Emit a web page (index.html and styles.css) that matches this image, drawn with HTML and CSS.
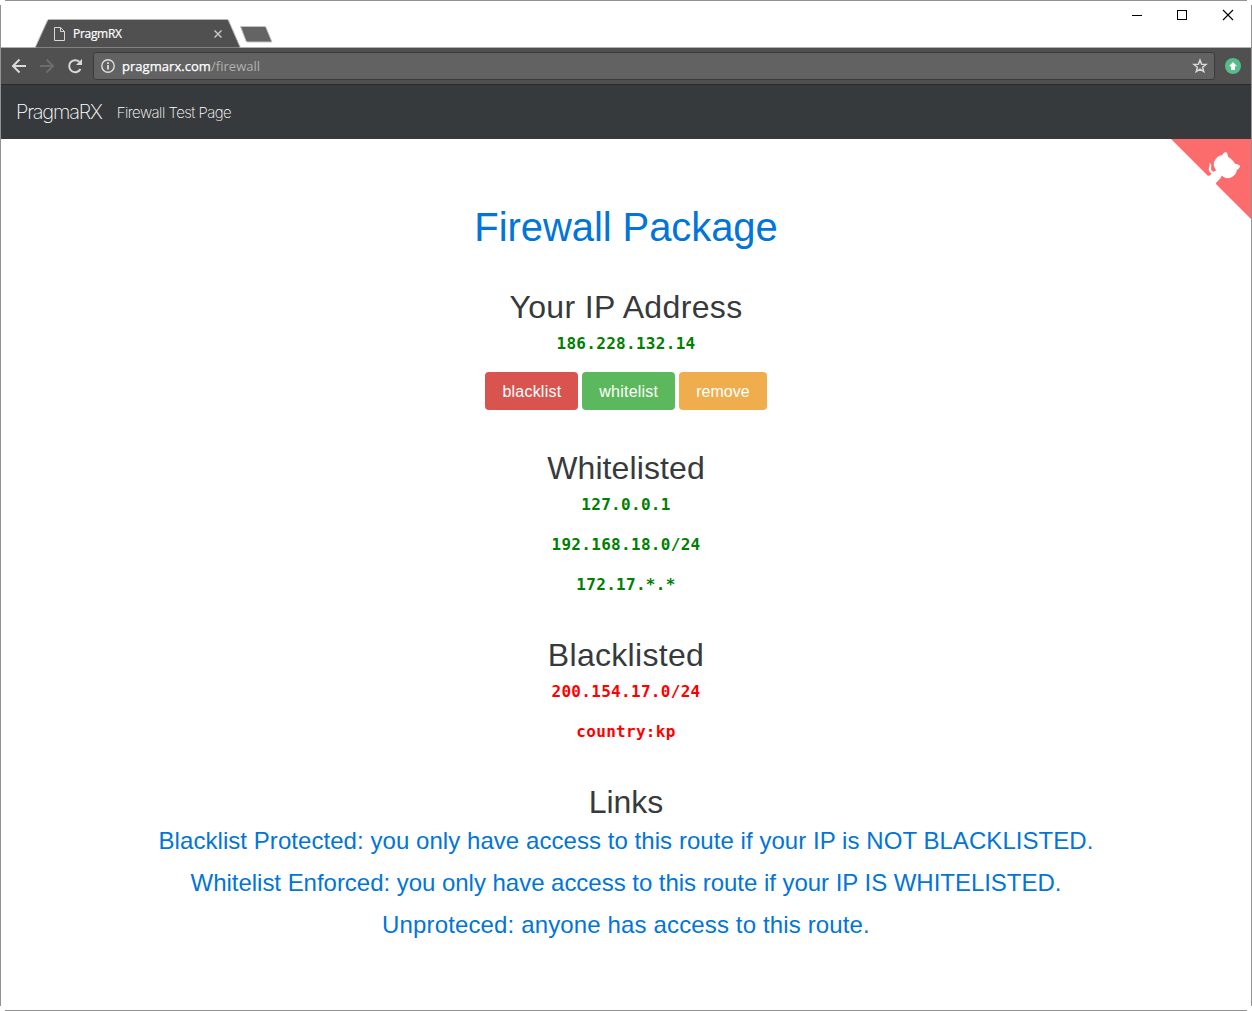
FILE: index.html
```html
<!DOCTYPE html>
<html lang="en">
<head>
<meta charset="utf-8">
<title>PragmRX</title>
<link rel="stylesheet" href="styles.css">
</head>
<body>
<div class="window">
  <i class="edge edge-top"></i><i class="edge edge-bottom"></i><i class="edge edge-left"></i><i class="edge edge-right"></i>
  <header class="titlebar">
    <div class="tab">
      <svg class="tab-shape" width="206" height="29" viewBox="0 0 206 29"><path d="M0 29 L12.5 1.5 Q13 .5 14 .5 H192 Q193 .5 193.5 1.5 L205.500 29Z" fill="#505050" stroke="#b5b5b5"/></svg>
      <svg class="tab-file" width="11" height="14" viewBox="0 0 11 14" fill="none" stroke="#d8d8d8"><path d="M.5.5H6.500L10.500 4.500V13.500H.5ZM6.500.5V4.500H10.500"/></svg>
      <span class="tab-title">PragmRX</span>
      <svg class="tab-close" width="8" height="8" viewBox="0 0 8 8" stroke="#c4c4c4" stroke-width="1.500"><path d="M.5.5 7.500 7.500M7.500.5.5 7.500"/></svg>
    </div>
    <svg class="new-tab" width="34" height="17" viewBox="0 0 34 17"><path d="M1.500 .5H25.500Q26.500 .5 27 1.500L33 16H9Q7.500 16 7 15Z" fill="#646464" stroke="#c2c2c2"/></svg>
    <svg class="controls" width="102" height="12" viewBox="0 0 102 12" fill="none" stroke="#000"><path d="M0 6.500H10M45.500 1.500H54.500V10.500H45.500Z" shape-rendering="crispEdges"/><path d="M91 1 101 11M101 1 91 11" stroke-width="1.100"/></svg>
  </header>
  <div class="toolbar">
    <svg class="nav-icons" width="74" height="16" viewBox="0 0 74 16" fill="none" stroke-width="2"><path d="M15 8H2M8.500 1.500 2 8 8.500 14.500" stroke="#dadada"/><path d="M29 8H42M35.500 1.500 42 8 35.500 14.500" stroke="#6c6c6c"/><path d="M69.500 11A6 6 0 1 1 68.300 3.800" stroke="#dadada"/><path d="M71 1V7H65Z" fill="#dadada"/></svg>
    <div class="address">
      <svg class="info" width="14" height="14" viewBox="0 0 14 14" fill="none" stroke="#dedede"><circle cx="7" cy="7" r="6.200" stroke-width="1.400"/><path d="M7 6V10.500M7 3.300V5" stroke-width="1.800"/></svg>
      <span class="url"><b>pragmarx.com</b>/firewall</span>
      <svg class="star" width="16" height="16" viewBox="0 0 16 16" fill="none" stroke="#dadada" stroke-width="1.400"><path d="M8 2 9.600 6.200 14.200 6.400 10.600 9.300 11.800 13.700 8 11.200 4.200 13.700 5.400 9.300 1.800 6.400 6.400 6.200Z"/></svg>
    </div>
    <svg class="extension" width="16" height="16" viewBox="0 0 16 16"><circle cx="8" cy="8" r="8" fill="#57bb8a"/><path d="M8 4 12 8.300H10V12H6V8.300H4Z" fill="#fff"/></svg>
  </div>
  <nav class="navbar"><a class="brand">PragmaRX</a><a class="nav-link">Firewall Test Page</a></nav>
  <main class="page">
    <svg class="corner" width="80" height="80" viewBox="0 0 250 250"><path d="M0,0 L115,115 L130,115 L142,142 L250,250 L250,0 Z" fill="#fd6c6c"/><path d="M128.3,109.0 C113.8,99.7 119.0,89.6 119.0,89.6 C122.0,82.7 120.5,78.6 120.5,78.6 C119.2,72.0 123.4,76.3 123.4,76.3 C127.3,80.9 125.5,87.3 125.5,87.3 C122.9,97.6 130.6,101.9 134.4,103.2" fill="#fff"/><path d="M115.0,115.0 C114.9,115.1 118.7,116.5 119.8,115.4 L133.7,101.6 C136.9,99.2 139.9,98.4 142.2,98.6 C133.8,88.0 127.5,74.4 143.8,58.0 C148.5,53.4 154.0,51.2 159.7,51.0 C160.3,49.4 163.2,43.6 171.4,40.1 C171.4,40.1 176.1,42.5 178.8,56.2 C183.1,58.6 187.2,61.8 190.9,65.4 C194.5,69.0 197.7,73.2 200.1,77.6 C213.8,80.2 216.3,84.9 216.3,84.9 C212.7,93.1 206.9,96.0 205.4,96.6 C205.1,102.4 203.0,107.8 198.3,112.5 C181.9,128.9 168.3,122.5 157.7,114.1 C157.9,116.9 156.7,120.9 152.7,124.9 L141.0,136.5 C139.8,137.7 141.6,141.9 141.8,141.8 Z" fill="#fff"/></svg>
    <h1>Firewall Package</h1>
    <section class="own">
      <h2 class="own-title">Your IP Address</h2>
      <p class="ip allowed">186.228.132.14</p>
      <div class="buttons"><a class="btn danger">blacklist</a><a class="btn success">whitelist</a><a class="btn warning">remove</a></div>
    </section>
    <section class="white">
      <h2 class="white-title">Whitelisted</h2>
      <p class="ip allowed">127.0.0.1</p><p class="ip allowed">192.168.18.0/24</p><p class="ip allowed">172.17.*.*</p>
    </section>
    <section class="black">
      <h2 class="black-title">Blacklisted</h2>
      <p class="ip denied">200.154.17.0/24</p><p class="ip denied">country:kp</p>
    </section>
    <section class="links">
      <h2>Links</h2>
      <a class="link-protected">Blacklist Protected: you only have access to this route if your IP is NOT BLACKLISTED.</a>
      <a class="link-enforced">Whitelist Enforced: you only have access to this route if your IP IS WHITELISTED.</a>
      <a class="link-open">Unproteced: anyone has access to this route.</a>
    </section>
  </main>
</div>
</body>
</html>
```
FILE: styles.css
```css
* { box-sizing: border-box; }
body { margin: 0; background: #fff; font-family: "Liberation Sans", Arial, sans-serif; color: #373a3c; }
svg { display: block; flex: none; }
.window { position: relative; width: 1252px; height: 1011px; padding: 1px; overflow: hidden; }
.edge { position: absolute; background: #929292; }
.edge-top, .edge-bottom { left: 5px; right: 5px; height: 1px; }
.edge-top { top: 0; }
.edge-bottom { bottom: 0; }
.edge-left, .edge-right { top: 5px; bottom: 5px; width: 1px; }
.edge-left { left: 0; }
.edge-right { right: 0; }

.titlebar { position: relative; display: flex; align-items: flex-start; height: 47px; padding: 18px 17px 0 34px; border-bottom: 1px solid #b0b4b0; }
.tab { position: relative; z-index: 1; display: flex; align-items: center; width: 206px; height: 29px; padding: 0 19px 0 19px; font: 12px "Open Sans", "Noto Sans", sans-serif; color: #fff; }
.tab-shape { position: absolute; left: 0; top: 0; }
.tab-file, .tab-title, .tab-close { position: relative; }
.tab-title { margin-left: 8px; letter-spacing: -.3px; -webkit-text-stroke: .2px #fff; }
.tab-close { margin-left: auto; }
.new-tab { margin: 7px 0 0 -2px; }
.controls { margin: -10px 0 0 auto; }

.toolbar { display: flex; align-items: center; height: 37px; padding: 0 10px; background: #505050; border-bottom: 1px solid #2b2b2b; }
.address { display: flex; align-items: center; flex: 1; height: 28px; margin: 0 10px 0 8px; padding: 0 6px 0 7px; background: #626262; border: 1px solid #3b3b3b; border-radius: 3px; }
.url { margin-left: 7px; font: 13px "Open Sans", "Noto Sans", sans-serif; letter-spacing: .04px; color: #b0b0b0; }
.url b { font-weight: 400; color: #fff; -webkit-text-stroke: .25px #fff; }
.star { margin-left: auto; }

.navbar { display: flex; align-items: center; height: 54px; padding: 0 15px; background: #373a3c; color: #fff; font-family: Inter, "Liberation Sans", sans-serif; font-weight: 200; }
.brand { font-size: 20px; letter-spacing: -1.2px; }
.nav-link { margin-left: 15px; font-size: 15px; letter-spacing: -.53px; padding-top: 1px; }

.page { position: relative; display: flex; flex-direction: column; align-items: center; padding-top: 66px; text-align: center; }
.corner { position: absolute; top: 0; right: 0; }
h1, h2, p { margin: 0; font-weight: 400; }
h1 { font-size: 40px; line-height: 44px; letter-spacing: -.08px; color: #0275d8; }
h2 { font-size: 32px; line-height: 35px; }
section { width: 100%; }
.own { margin-top: 41px; }
.own-title, .white-title, .black-title { margin-bottom: 7px; }
.own-title { letter-spacing: .36px; }
.white-title { letter-spacing: .1px; }
.black-title { letter-spacing: .3px; }
.ip { font: bold 16px/24px "DejaVu Sans Mono", monospace; letter-spacing: .3px; }
.ip + .ip { margin-top: 16px; }
.allowed { color: #008000; }
.denied { color: #f00; }
.buttons { display: flex; justify-content: center; gap: 4px; margin-top: 16px; }
.btn { padding: 8px 17px 6px; border-radius: 4px; font-size: 16px; line-height: 24px; color: #fff; }
.danger, .success { letter-spacing: .22px; }
.danger { background: #d9534f; }
.success { background: #5cb85c; }
.warning { background: #f0ad4e; }
.white, .black, .links { margin-top: 41px; }
.links { display: flex; flex-direction: column; align-items: center; }
.links a { font-size: 24px; line-height: 42px; color: #0275d8; white-space: nowrap; }
.link-protected { letter-spacing: .055px; }
.link-enforced { letter-spacing: -.03px; }
.link-open { letter-spacing: .14px; }
```
